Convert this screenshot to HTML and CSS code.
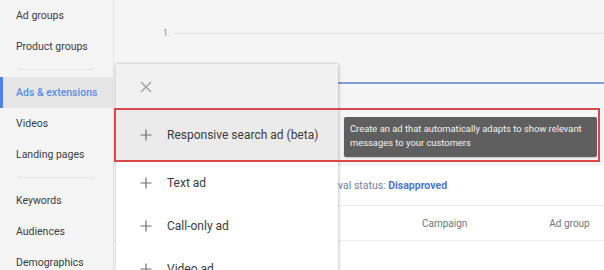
FILE: index.html
```html
<!DOCTYPE html>
<html>
<head>
<meta charset="utf-8">
<link rel="stylesheet" href="styles.css">
</head>
<body>
<div class="app">
  <nav class="sidebar">
    <div class="nav-item">Ad groups</div>
    <div class="nav-item">Product groups</div>
    <div class="nav-sep"></div>
    <div class="nav-item active">Ads &amp; extensions</div>
    <div class="nav-item">Videos</div>
    <div class="nav-item">Landing pages</div>
    <div class="nav-sep"></div>
    <div class="nav-item">Keywords</div>
    <div class="nav-item">Audiences</div>
    <div class="nav-item">Demographics</div>
  </nav>
  <main class="main">
    <section class="chart">
      <div class="grid-row">
        <span class="axis-label">1</span>
        <span class="grid-line"></span>
      </div>
      <div class="data-line"></div>
    </section>
    <section class="table">
      <div class="filter-row">Approval status: <b class="filter-value">Disapproved</b></div>
      <div class="table-head">
        <span class="col col-campaign">Campaign</span>
        <span class="col col-adgroup">Ad group</span>
      </div>
    </section>
  </main>
</div>

<div class="menu">
  <div class="menu-head">
    <svg class="icon-close" width="12" height="12" viewBox="0 0 12 12"><path d="M1 1L11 11M11 1L1 11" stroke="#a0a0a0" stroke-width="1.4" fill="none"/></svg>
  </div>
  <div class="menu-item hover">
    <svg class="icon-plus" width="12" height="12" viewBox="0 0 12 12"><path d="M6 0.5V11.5M0.5 6H11.5" stroke="#6f6f6f" stroke-width="1.2" fill="none"/></svg>
    <span>Responsive search ad (beta)</span>
  </div>
  <div class="menu-item">
    <svg class="icon-plus" width="12" height="12" viewBox="0 0 12 12"><path d="M6 0.5V11.5M0.5 6H11.5" stroke="#6f6f6f" stroke-width="1.2" fill="none"/></svg>
    <span>Text ad</span>
  </div>
  <div class="menu-item">
    <svg class="icon-plus" width="12" height="12" viewBox="0 0 12 12"><path d="M6 0.5V11.5M0.5 6H11.5" stroke="#6f6f6f" stroke-width="1.2" fill="none"/></svg>
    <span>Call-only ad</span>
  </div>
  <div class="menu-item">
    <svg class="icon-plus" width="12" height="12" viewBox="0 0 12 12"><path d="M6 0.5V11.5M0.5 6H11.5" stroke="#6f6f6f" stroke-width="1.2" fill="none"/></svg>
    <span>Video ad</span>
  </div>
</div>

<div class="highlight-box"></div>

<div class="tooltip">Create an ad that automatically adapts to show relevant messages to your customers</div>
</body>
</html>
```

FILE: styles.css
```css
html, body {
  margin: 0;
  padding: 0;
}
body {
  width: 604px;
  height: 270px;
  overflow: hidden;
  font-family: Roboto, "Liberation Sans", Arial, sans-serif;
  background: #ffffff;
  position: relative;
}
.app {
  display: flex;
  height: 270px;
}
.sidebar {
  width: 113px;
  flex: none;
  background: #f5f5f5;
  border-right: 1px solid #e2e2e2;
  display: flex;
  flex-direction: column;
}
.nav-item {
  height: 31px;
  flex: none;
  display: flex;
  align-items: center;
  padding-left: 16px;
  font-size: 10.5px;
  color: #3c3c3c;
  box-sizing: border-box;
}
.nav-item.active {
  background: #e6e6e6;
  color: #5a8ee4;
  font-weight: 500;
  border-left: 3px solid #4a84e8;
  padding-left: 13px;
}
.nav-sep {
  height: 15px;
  flex: none;
  display: flex;
  align-items: center;
}
.nav-sep::after {
  content: "";
  display: block;
  margin-left: 18px;
  width: 76px;
  height: 1px;
  background: #e4e4e4;
}
.main {
  flex: 1;
  display: flex;
  flex-direction: column;
}
.chart {
  background: #f5f5f5;
  height: 166px;
  flex: none;
  display: flex;
  flex-direction: column;
}
.grid-row {
  margin-top: 27px;
  display: flex;
  align-items: center;
  height: 12px;
  padding-left: 49px;
  gap: 6px;
}
.axis-label {
  font-size: 8.5px;
  color: #8a8a8a;
}
.grid-line {
  flex: 1;
  height: 1px;
  background: #e0e0e0;
}
.data-line {
  margin-top: 43px;
  margin-left: 60px;
  height: 2px;
  background: #7f9fd8;
}
.table {
  flex: 1;
  background: #ffffff;
}
.filter-row {
  height: 39px;
  display: flex;
  align-items: center;
  padding-left: 196px;
  font-size: 10.5px;
  color: #6f7fa0;
  white-space: pre;
  border-bottom: 1px solid #ececec;
}
.filter-value {
  color: #4a78c8;
  font-weight: 700;
}
.table-head {
  height: 34px;
  display: flex;
  align-items: center;
  border-bottom: 1px solid #ededed;
  font-size: 10px;
  color: #757575;
}
.col-campaign {
  margin-left: 308px;
}
.col-adgroup {
  margin-left: 82px;
}
.menu {
  position: absolute;
  left: 116px;
  top: 64px;
  width: 222px;
  height: 206px;
  overflow: hidden;
  background: #ffffff;
  box-shadow: 0 0 3px rgba(0,0,0,0.22), 1px 1px 4px rgba(0,0,0,0.12);
  display: flex;
  flex-direction: column;
}
.menu-head {
  height: 45px;
  flex: none;
  background: #f1f1f1;
  display: flex;
  align-items: center;
  padding-left: 24px;
}
.menu-item {
  height: 43px;
  flex: none;
  display: flex;
  align-items: center;
  padding-left: 24px;
  gap: 15px;
  font-size: 12px;
  color: #3c3c3c;
}
.menu-item.hover {
  height: 52px;
  background: #ebebeb;
}
.highlight-box {
  position: absolute;
  left: 114px;
  top: 108px;
  width: 482px;
  height: 50px;
  border: 2px solid #d9484a;
}
.tooltip {
  position: absolute;
  left: 344px;
  top: 117px;
  width: 253px;
  height: 40px;
  box-sizing: border-box;
  padding: 5px 5px 5px 6px;
  background: #5f5f5f;
  border-radius: 2px;
  color: #f2f2f2;
  font-size: 9.4px;
  line-height: 14px;
  box-shadow: 0 1px 2px rgba(0,0,0,0.2);
}
```
